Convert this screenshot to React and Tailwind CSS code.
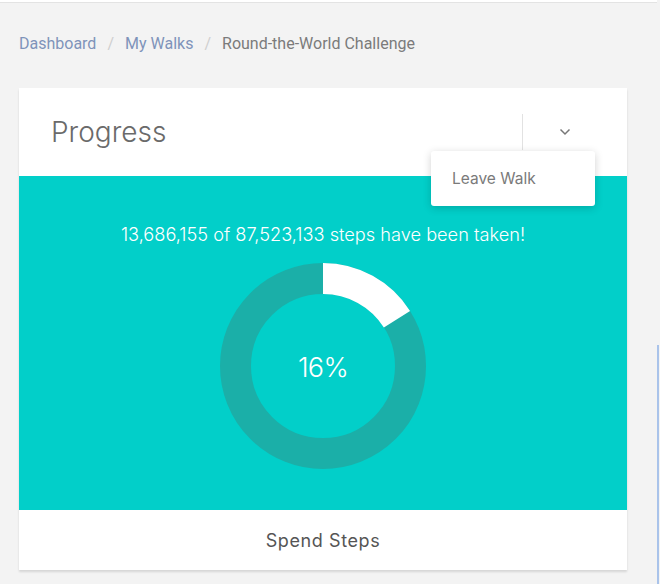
import React from "react";

const TEAL = "#02cfc9";

// donut ring showing the share of steps taken
const Donut = ({ percent }) => {
  const r = 87.5;
  const c = 2 * Math.PI * r;
  const filled = (percent / 100) * c;

  return (
    <div className="relative w-[208px] h-[208px]">
      <svg width="208" height="208" viewBox="0 0 208 208">
        <circle cx="104" cy="104" r={r} fill="none" stroke="#1bafa8" strokeWidth="31" />
        <circle
          cx="104"
          cy="104"
          r={r}
          fill="none"
          stroke="#ffffff"
          strokeWidth="31"
          strokeDasharray={`${filled} ${c}`}
          transform="rotate(-90 104 104)"
        />
      </svg>
      <div className="absolute inset-0 pt-[4px] flex items-center justify-center text-white text-[27px] font-light tracking-tight">
        {percent}%
      </div>
    </div>
  );
};

const App = () => {
  return (
    <div className="min-h-[584px] bg-[#f3f3f3] font-['Inter',sans-serif] flex">
      <div className="flex-1">
        {/* TOP EDGE */}
        <div className="h-[2px] bg-white" />
        <div className="h-px bg-[#e3e3e3]" />

        {/* BREADCRUMB */}
        <div className="pl-[19px] pt-[31px] h-[85px] flex items-start text-[16px] font-['Roboto',sans-serif] leading-5">
          <span className="text-[#7f93ba]">Dashboard</span>
          <span className="text-[#cfcfcf] mx-[11px]">/</span>
          <span className="text-[#7f93ba]">My Walks</span>
          <span className="text-[#cfcfcf] mx-[11px]">/</span>
          <span className="text-[#7b7b7b]">Round-the-World Challenge</span>
        </div>

        {/* CARD */}
        <div className="ml-[19px] w-[608px] shadow-[0_2px_2px_rgba(0,0,0,0.12)]">
          <div className="relative h-[88px] bg-white flex items-center">
            <h2 className="pl-[32px] flex-1 text-[28px] font-light text-[#6a6a6a]">
              Progress
            </h2>
            <div className="w-px h-[36px] bg-[#e2e2e2]" />
            <div className="w-[84px] mr-[20px] flex justify-center">
              <svg width="12" height="8" viewBox="0 0 12 8">
                <path d="M1.5 1.5 L6 6 L10.5 1.5" fill="none" stroke="#777" strokeWidth="1.5" />
              </svg>
            </div>

            {/* DROPDOWN */}
            <div className="absolute left-[412px] top-[63px] w-[164px] h-[55px] bg-white rounded-[3px] shadow-[0_2px_8px_rgba(0,0,0,0.18)] z-10 flex items-center pl-[21px] text-[15.5px] text-[#7a7a7a]">
              Leave Walk
            </div>
          </div>

          <div className="h-[334px] flex flex-col items-center" style={{ backgroundColor: TEAL }}>
            <p className="mt-[47px] text-white text-[18.2px] font-light leading-[22px]">
              13,686,155 of 87,523,133 steps have been taken!
            </p>
            <div className="mt-[17px]">
              <Donut percent={16} />
            </div>
          </div>

          <div className="h-[60px] bg-white flex items-center justify-center text-[18px] text-[#555] tracking-[0.6px]">
            Spend Steps
          </div>
        </div>
      </div>

      {/* RIGHT EDGE OF NEXT PANEL */}
      <div className="w-[3px] flex flex-col">
        <div className="h-[345px]" />
        <div className="flex-1 border-l-2 border-[#a9c3ea]" />
      </div>
    </div>
  );
};

export default App;
